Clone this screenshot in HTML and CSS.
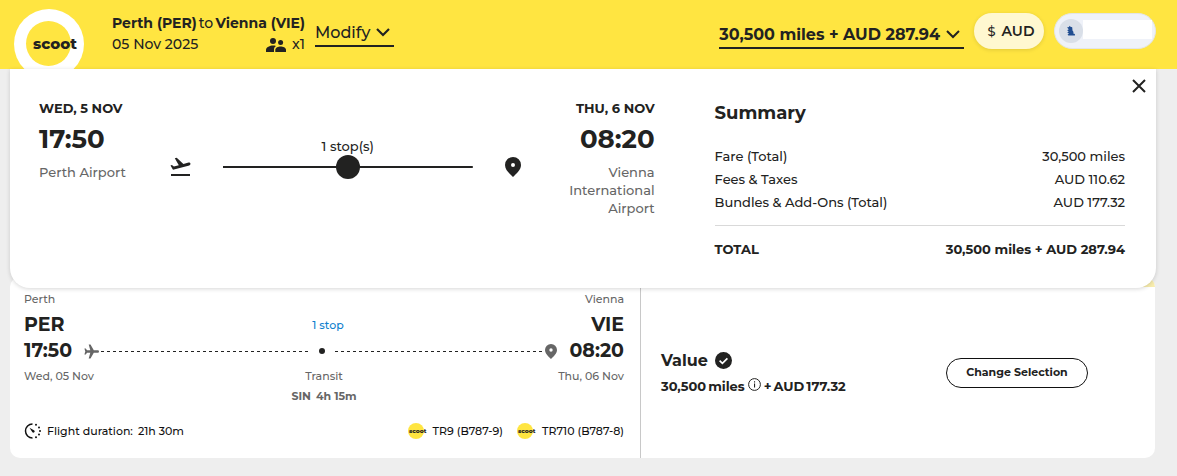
FILE: index.html
```html
<!DOCTYPE html>
<html lang="en">
<head>
<meta charset="utf-8">
<meta name="viewport" content="width=device-width, initial-scale=1">
<title>Scoot – Flight selection</title>
<link rel="stylesheet" href="styles.css">
</head>
<body>
<header class="header">
  <a class="logo" href="#" aria-label="Scoot home">
    <svg width="70" height="70" viewBox="0 0 70 70">
      <circle cx="35" cy="35" r="35" fill="#fff"/>
      <circle cx="34.5" cy="34.5" r="22.5" fill="#ffe541"/>
      <text class="logo-word" x="19" y="40" font-size="15">scoot</text>
    </svg>
  </a>
  <div class="trip">
    <div class="trip-row"><strong>Perth (PER)</strong><span>to</span><strong>Vienna (VIE)</strong></div>
    <div class="trip-row">
      <span>05 Nov 2025</span>
      <span class="pax">
        <svg width="20" height="14" viewBox="0 0 20 14" fill="#222221"><circle cx="7" cy="3" r="3"/><circle cx="14.600" cy="4.500" r="2.500"/><path d="M0 14v-2c0-3 4-4.500 7-4.500 1 0 2 .1 3 .4-1.400.9-2 2-2 3.600V14z"/><path d="M9.300 14v-2.200c0-2.300 3-3.400 5.300-3.400s5.400 1.100 5.400 3.400V14z"/></svg>
        x1
      </span>
    </div>
  </div>
  <button class="drop" type="button">Modify
    <svg width="14" height="9" viewBox="0 0 14 9"><path d="M1 1l6 6 6-6" fill="none" stroke="#222221" stroke-width="2.200"/></svg>
  </button>
  <div class="header-right">
    <button class="drop drop-price" type="button">30,500 miles + AUD 287.94
      <svg width="14" height="9" viewBox="0 0 14 9"><path d="M1 1l6 6 6-6" fill="none" stroke="#222221" stroke-width="2"/></svg>
    </button>
    <button class="currency" type="button"><span class="currency-sign">$</span>AUD</button>
    <button class="account" type="button" aria-label="Account">
      <svg width="24" height="24" viewBox="0 0 24 24"><circle cx="12" cy="12" r="12" fill="#d9dfe8"/><path d="M8 8.500l2-.5.5-1.200 1 1 1.700.5.300 3.200 1 1.600-.2 1.300 1.600.6 0 1.500H9.500l-1-.8 1.500-1.100-1.800-1 1.500-1.200-1.500-1.200 1.600-.9z" fill="#204d91"/></svg>
      <span class="account-name"></span>
    </button>
  </div>
</header>

<section class="panel">
  <button class="close" type="button" aria-label="Close">
    <svg width="14" height="14" viewBox="0 0 14 14"><path d="M1 1l12 12M13 1L1 13" stroke="#222221" stroke-width="2"/></svg>
  </button>
  <div class="itinerary">
    <div class="point">
      <div class="point-date">WED, 5 NOV</div>
      <div class="point-time">17:50</div>
      <div class="point-place">Perth Airport</div>
    </div>
    <div class="track">
      <svg width="21" height="20" viewBox="0 0 21 20"><path d="M1 17h19v2H1z" fill="#222221"/><path d="M20.400 6.600c-.2-.8-1-1.200-1.800-1L13.400 7 6.700.7l-1.900.5L8.800 8.200l-4.900 1.300-2-1.500-1.400.4 2.500 4.400L19.300 8.400c.8-.2 1.300-1 1.100-1.800z" fill="#222221"/></svg>
      <div class="track-line"><span class="track-label">1 stop(s)</span><span class="track-dot"></span></div>
      <svg width="16" height="20" viewBox="0 0 16 20"><path fill-rule="evenodd" d="M8 0a8 8 0 0 0-8 8c0 5 4.500 8.500 8 12 3.500-3.500 8-7 8-12a8 8 0 0 0-8-8zm0 6a2 2 0 1 1 0 4 2 2 0 0 1 0-4z" fill="#222221"/></svg>
    </div>
    <div class="point point-end">
      <div class="point-date">THU, 6 NOV</div>
      <div class="point-time">08:20</div>
      <div class="point-place">Vienna International Airport</div>
    </div>
  </div>
  <div class="summary">
    <h2 class="summary-title">Summary</h2>
    <table class="costs">
      <tbody>
        <tr><th scope="row">Fare (Total)</th><td>30,500 miles</td></tr>
        <tr><th scope="row">Fees &amp; Taxes</th><td>AUD 110.62</td></tr>
        <tr><th scope="row">Bundles &amp; Add-Ons (Total)</th><td>AUD 177.32</td></tr>
      </tbody>
      <tfoot>
        <tr><th scope="row">TOTAL</th><td>30,500 miles + AUD 287.94</td></tr>
      </tfoot>
    </table>
  </div>
</section>

<main class="flight">
  <div class="leg">
    <div class="leg-row leg-small"><span>Perth</span><span></span><span>Vienna</span></div>
    <div class="leg-row leg-large"><span>PER</span><a class="stops" href="#">1 stop</a><span>VIE</span></div>
    <div class="route leg-large">
      <span>17:50</span>
      <div class="path">
        <svg width="15" height="15" viewBox="0 0 15 15" fill="#666"><path d="M15 7.500c0 .8-.6 1.300-1.400 1.300H9.800L6.500 14.500H4.700l1.600-5.700H3L1.800 10.400H.4l.9-2.900-.9-2.900h1.400L3 6.200h3.300L4.700.5h1.800l3.300 5.700h3.800c.8 0 1.400.5 1.400 1.300z"/></svg>
        <span class="dashes"></span><span class="stop-dot"></span><span class="dashes"></span>
        <svg width="12" height="15" viewBox="0 0 12 15"><path fill-rule="evenodd" d="M6 0a6 6 0 0 0-6 6c0 3.700 3.400 6.300 6 9 2.600-2.700 6-5.300 6-9a6 6 0 0 0-6-6zm0 4.300a1.700 1.700 0 1 1 0 3.400 1.700 1.700 0 0 1 0-3.400z" fill="#666"/></svg>
      </div>
      <span>08:20</span>
    </div>
    <div class="leg-row leg-small"><span>Wed, 05 Nov</span><span>Transit</span><span>Thu, 06 Nov</span></div>
    <div class="transit"><span>SIN</span><span>4h 15m</span></div>
    <div class="leg-foot">
      <span class="tag">
        <svg width="18" height="16" viewBox="-1 0 18 16"><path d="M7.500 1a7 7 0 0 0 0 14" fill="none" stroke="#111" stroke-width="1.500"/><path d="M4.500 4.800l4.800 2.600a1.300 1.300 0 1 1-1.900 1.800z" fill="#111"/><g fill="#111"><circle cx="11" cy="1.700" r="1"/><circle cx="14" cy="4.500" r="1"/><circle cx="15" cy="8" r="1"/><circle cx="14" cy="11.500" r="1"/><circle cx="11" cy="14.300" r="1"/></g></svg>
        <span>Flight duration:</span><span>21h 30m</span>
      </span>
      <span class="tags">
        <span class="tag"><svg width="20" height="16" viewBox="0 0 20 16"><circle cx="8" cy="8" r="8" fill="#ffe541"/><text class="logo-word" x="1" y="10" font-size="6">scoot</text></svg>TR9 (B787-9)</span>
        <span class="tag"><svg width="20" height="16" viewBox="0 0 20 16"><circle cx="8" cy="8" r="8" fill="#ffe541"/><text class="logo-word" x="1" y="10" font-size="6">scoot</text></svg>TR710 (B787-8)</span>
      </span>
    </div>
  </div>
  <div class="fare">
    <div class="fare-body">
      <div>
        <div class="fare-name">Value
          <svg width="17" height="17" viewBox="0 0 17 17"><circle cx="8.500" cy="8.500" r="8.500" fill="#222221"/><path d="M4.600 8.600l2.800 2.700 5-5" fill="none" stroke="#fff" stroke-width="1.700"/></svg>
        </div>
        <div class="fare-price"><span>30,500</span><span>miles</span>
          <svg width="15" height="16" viewBox="-1 0 15 16"><circle cx="6.500" cy="6.500" r="5.900" fill="none" stroke="#222221"/><path d="M6 5.500h1.100v4H6zM6 3.300h1.100v1.200H6z" fill="#222221"/></svg>
          <span>+</span><span>AUD</span><span>177.32</span></div>
      </div>
      <button class="change" type="button">Change Selection</button>
    </div>
  </div>
</main>
</body>
</html>
```
FILE: styles.css
```css
* {
  box-sizing: border-box;
}

body {
  margin: 0;
  background: #eee;
  color: #222221;
  font-family: Montserrat, Inter, sans-serif;
  font-size: 13px;
  font-weight: 500;
}

button {
  font: inherit;
  color: inherit;
  background: none;
  border: 0;
  padding: 0;
  cursor: pointer;
}

svg {
  display: block;
  flex: none;
}

.logo-word {
  font-family: Montserrat, Lato, sans-serif;
  font-weight: 800;
  fill: #222221;
}

.header {
  display: flex;
  align-items: flex-start;
  height: 69px;
  padding: 0 21px 0 14px;
  background: #ffe541;
  overflow: hidden;
}

.logo {
  margin-top: 9px;
}

.trip {
  width: 193px;
  margin: 13px 10px 0 28px;
  font-size: 14px;
  line-height: 21px;
  white-space: nowrap;
}

.trip-row {
  display: flex;
  justify-content: space-between;
}

.trip strong {
  font-weight: 700;
}

.pax {
  display: flex;
  align-items: center;
  gap: 6px;
}

.drop {
  display: flex;
  align-items: center;
  gap: 6px;
  margin-top: 20px;
  padding-right: 4px;
  border-bottom: 2px solid #222221;
  font-size: 16px;
  line-height: 25px;
  white-space: nowrap;
}

.header-right {
  display: flex;
  align-items: flex-start;
  gap: 10px;
  margin-left: auto;
}

.drop-price {
  margin-top: 22px;
  font-weight: 700;
}

.currency {
  display: flex;
  align-items: center;
  justify-content: center;
  gap: 6px;
  width: 70px;
  height: 36px;
  margin-top: 13px;
  padding-left: 4px;
  border-radius: 18px;
  background: #fff8d0;
  box-shadow: 0 1px 4px rgba(0, 0, 0, 0.12);
  font-size: 14px;
  font-weight: 600;
}

.currency-sign {
  font-size: 13px;
  font-weight: 500;
}

.account {
  display: flex;
  align-items: center;
  width: 102px;
  height: 36px;
  margin-top: 13px;
  padding: 0 3px 3px 4px;
  border: 1px solid #e3e5e6;
  border-radius: 18px;
  background: #eff2f9;
}

.account svg {
  margin-top: 2px;
}

.account-name {
  flex: 1;
  height: 19px;
  background: #fff;
}

.panel {
  position: relative;
  z-index: 1;
  display: grid;
  grid-template-columns: 3fr 2fr;
  gap: 60px;
  margin: 0 21px 0 10px;
  padding: 30px 31px 27px 29px;
  border-radius: 0 0 20px 20px;
  background: #fff;
  box-shadow: 0 1px 4px rgba(0, 0, 0, 0.16);
}

.close {
  position: absolute;
  top: 10px;
  right: 10px;
}

.itinerary {
  display: flex;
}

.point {
  width: 131px;
}

.point-end {
  width: 134px;
  padding-left: 42px;
  text-align: right;
}

.point-date {
  line-height: 18px;
  font-weight: 700;
  white-space: nowrap;
}

.point-time {
  margin: 6px 0 7px;
  font-size: 26px;
  font-weight: 700;
  line-height: 33px;
}

.point-place {
  color: #666;
  line-height: 18px;
}

.track {
  display: flex;
  flex: 1;
  align-items: center;
  gap: 32px;
  height: 24px;
  margin-top: 56px;
}

.track-line {
  position: relative;
  display: flex;
  flex: 1;
  align-items: center;
  justify-content: center;
  height: 24px;
  background: linear-gradient(#222221, #222221) center / 100% 2px no-repeat;
}

.track-label {
  position: absolute;
  bottom: 24px;
  line-height: 18px;
}

.track-dot {
  width: 24px;
  height: 24px;
  border-radius: 50%;
  background: #222221;
}

.summary-title {
  margin: 0 0 20px;
  padding-top: 2px;
  font-size: 18px;
  font-weight: 700;
  line-height: 24px;
}

.costs {
  width: 100%;
  border-collapse: collapse;
}

.costs th,
.costs td {
  padding: 0;
  line-height: 23px;
  font-weight: 500;
  text-align: left;
}

.costs td {
  text-align: right;
}

.costs tbody tr:last-child > * {
  padding-bottom: 11px;
}

.costs tfoot th,
.costs tfoot td {
  padding-top: 12px;
  border-top: 1px solid #d9d9d9;
  font-weight: 700;
}

.flight {
  display: grid;
  grid-template-columns: 631fr 514fr;
  margin: -11px 22px 0 10px;
  border-radius: 10px;
  background: #fff;
  overflow: hidden;
}

.leg {
  padding: 13px 16px 18px 14px;
  border-right: 1px solid #c8c8c8;
}

.leg-row {
  display: grid;
  grid-template-columns: 1fr auto 1fr;
  align-items: center;
}

.leg-row > :last-child {
  text-align: right;
}

.leg-small {
  color: #666;
  font-size: 11px;
  line-height: 18px;
}

.leg-large {
  font-size: 19px;
  font-weight: 700;
  line-height: 26px;
}

.leg-small + .leg-large {
  margin-top: 4px;
}

.stops {
  padding-left: 8px;
  color: #0f7fce;
  font-size: 11px;
  font-weight: 500;
  text-decoration: none;
}

.route {
  display: flex;
  gap: 12px;
  margin-bottom: 3px;
}

.path {
  display: flex;
  flex: 1;
  align-items: center;
  gap: 2px;
}

.dashes {
  flex: 1;
  height: 1px;
  background: repeating-linear-gradient(90deg, #222 0 3px, transparent 3px 6px);
}

.stop-dot {
  width: 6px;
  height: 6px;
  margin: 0 8px;
  border-radius: 50%;
  background: #222221;
}

.transit {
  display: flex;
  justify-content: center;
  gap: 5px;
  margin-top: 2px;
  color: #666;
  font-size: 11px;
  font-weight: 700;
  line-height: 18px;
}

.leg-foot {
  display: flex;
  justify-content: space-between;
  margin-top: 17px;
  color: #111;
  font-size: 11px;
  line-height: 18px;
}

.tag {
  display: flex;
  align-items: center;
  gap: 5px;
}

.tags {
  display: flex;
  gap: 14px;
}

.fare {
  display: flex;
  flex-direction: column;
  border-top: 10px solid #f8edae;
}

.fare-body {
  display: flex;
  flex: 1;
  align-items: center;
  justify-content: space-between;
  padding: 0 67px 0 20px;
}

.fare-name {
  display: flex;
  align-items: center;
  gap: 7px;
  padding-top: 2px;
  font-size: 16px;
  font-weight: 700;
  line-height: 24px;
}

.fare-price {
  display: flex;
  align-items: center;
  gap: 2px;
  font-weight: 700;
  line-height: 26px;
}

.change {
  width: 142px;
  height: 30px;
  padding-bottom: 2px;
  border: 1px solid #111;
  border-radius: 15px;
  font-size: 11px;
  font-weight: 700;
}
```
